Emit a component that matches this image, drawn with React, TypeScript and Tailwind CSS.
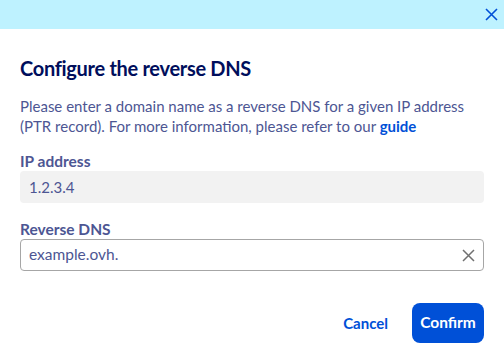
import React from "react";

export default function App() {
  return (
    <div className="w-[504px] h-[362px] bg-white overflow-hidden" style={{ fontFamily: "'Lato', 'Open Sans', sans-serif" }}>
      <div className="h-[29px] bg-[#bef2ff] flex items-center justify-end pr-[6px]">
        <svg width="13" height="13" viewBox="0 0 13 13" className="text-[#0050d7]">
          <path d="M1 1 L12 12 M12 1 L1 12" stroke="currentColor" strokeWidth="1.6" fill="none" />
        </svg>
      </div>
      <div className="px-5 pt-[25px]">
        <h1 className="text-[20px] leading-[28px] tracking-[-0.3px] font-bold text-[#000e5c]">Configure the reverse DNS</h1>
        <p className="mt-[14px] text-[15px] leading-[20px] text-[#4d5693]">
          Please enter a domain name as a reverse DNS for a given IP address (PTR record). For more information, please refer to our{" "}
          <a className="font-bold text-[#0050d7]">guide</a>
        </p>
        <div className="mt-[15px]">
          <div className="text-[15.5px] leading-[20px] font-bold text-[#4d5693]">IP address</div>
          <div className="h-[32px] rounded-[4px] bg-[#f2f2f2] flex items-center px-[9px] text-[15px] text-[#4d5693]">1.2.3.4</div>
        </div>
        <div className="mt-[16px]">
          <div className="text-[15.5px] leading-[20px] font-bold text-[#4d5693]">Reverse DNS</div>
          <div className="h-[32px] rounded-[4px] border border-[#a6a6a6] flex items-center justify-between pl-[8px] pr-[8px] text-[15.5px] text-[#4d5693]">
            <span>example.ovh.</span>
            <svg width="13" height="13" viewBox="0 0 13 13" className="text-[#707070]">
              <path d="M1 1 L12 12 M12 1 L1 12" stroke="currentColor" strokeWidth="1.5" fill="none" />
            </svg>
          </div>
        </div>
        <div className="mt-[32px] flex justify-end items-center gap-6">
          <button className="text-[15px] font-bold text-[#0050d7]">Cancel</button>
          <button className="h-[40px] w-[72px] rounded-[8px] bg-[#0050d7] text-white text-[15.5px] font-bold">Confirm</button>
        </div>
      </div>
    </div>
  );
}
